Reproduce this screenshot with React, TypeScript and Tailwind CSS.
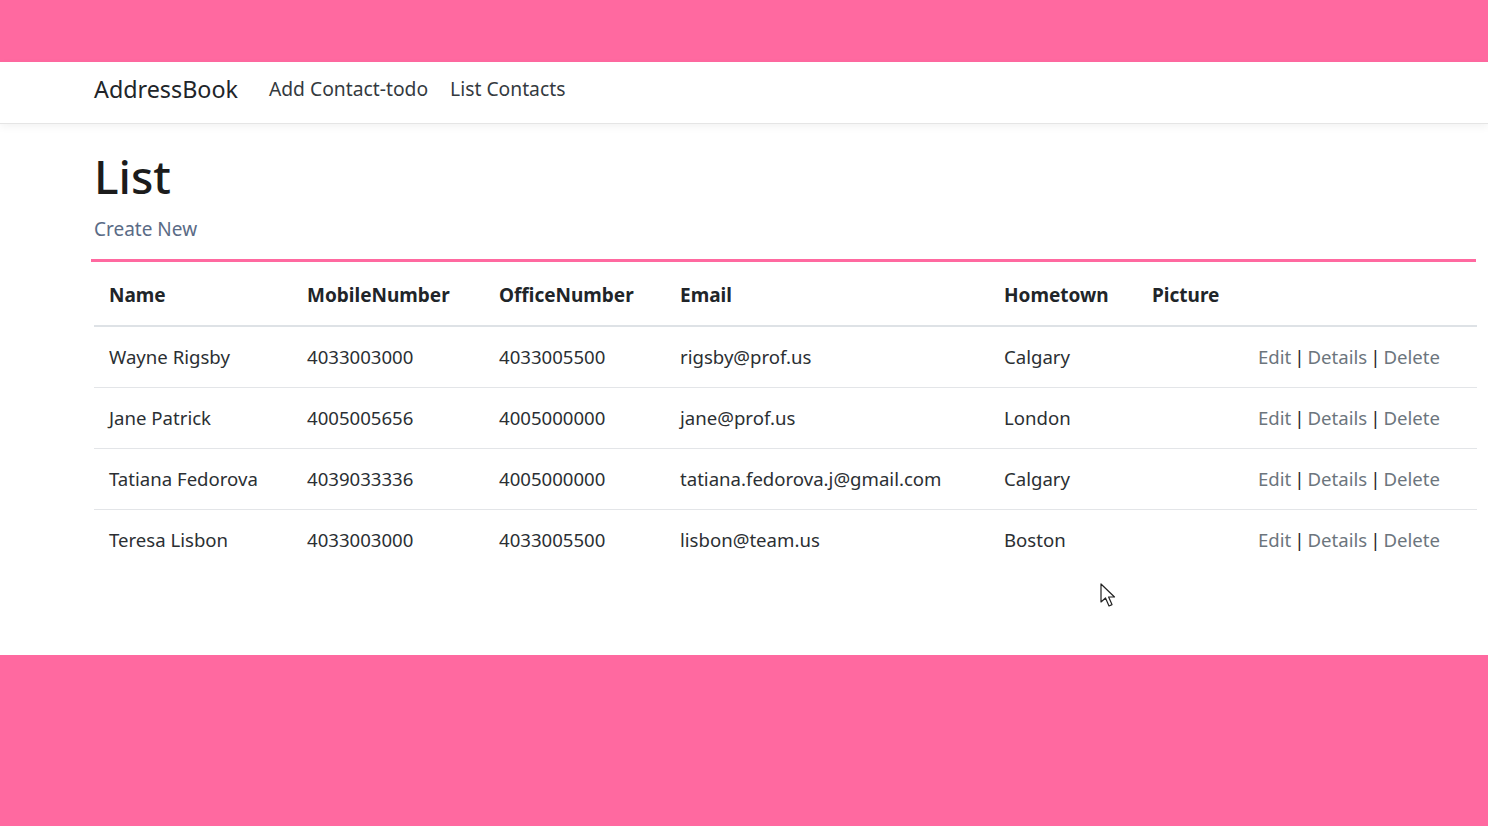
import React from "react";

const contacts = [
  { name: "Wayne Rigsby", mobile: "4033003000", office: "4033005500", email: "rigsby@prof.us", town: "Calgary" },
  { name: "Jane Patrick", mobile: "4005005656", office: "4005000000", email: "jane@prof.us", town: "London" },
  { name: "Tatiana Fedorova", mobile: "4039033336", office: "4005000000", email: "tatiana.fedorova.j@gmail.com", town: "Calgary" },
  { name: "Teresa Lisbon", mobile: "4033003000", office: "4033005500", email: "lisbon@team.us", town: "Boston" },
];

const headers = ["Name", "MobileNumber", "OfficeNumber", "Email", "Hometown", "Picture", ""];

export default function App() {
  return (
    <div className="min-h-[826px] bg-[#ff69a0] font-['Noto_Sans','Open_Sans',sans-serif] text-[#212529]">
      <div className="h-[62px]" />
      <div className="relative h-[593px] bg-white">
        {/* navbar */}
        <nav className="flex h-[62px] items-center border-b border-[#e5e5e5] bg-white pb-[7px] pl-[94px] shadow-[0_3px_8px_rgba(0,0,0,0.05)]">
          <span className="text-[23.3px] text-[#212529]">AddressBook</span>
          <div className="ml-[31px] flex gap-[22px] text-[19.3px] text-[#343a40]">
            <span>Add Contact-todo</span>
            <span>List Contacts</span>
          </div>
        </nav>

        <main className="pl-[91px] pr-[12px]">
          <h1 className="ml-[3px] mt-[22px] text-[46px] font-medium leading-[60px] text-[#1c1c1c]">List</h1>
          <div className="ml-[3px] mt-[10px] text-[19px] leading-[27px] text-[#5a6b86]">Create New</div>
          <div className="mt-[16px] h-[3px] bg-[#ff69a0]" />

          <table className="ml-[3px] w-[1383px] table-fixed border-collapse text-[18.6px] text-[#2b2f33]">
            <colgroup>
              <col className="w-[198px]" />
              <col className="w-[192px]" />
              <col className="w-[181px]" />
              <col className="w-[324px]" />
              <col className="w-[148px]" />
              <col className="w-[106px]" />
              <col />
            </colgroup>
            <thead>
              <tr className="h-[64px] border-b-2 border-[#dee2e6]">
                {headers.map((h, i) => (
                  <th key={i} className="px-[15px] pt-[3px] text-left text-[19px] font-bold text-[#212529]">
                    {h}
                  </th>
                ))}
              </tr>
            </thead>
            <tbody>
              {contacts.map((c, i) => (
                <tr key={i} className={"h-[61px] " + (i < contacts.length - 1 ? "border-b border-[#e3e5e8]" : "")}>
                  <td className="px-[15px]">{c.name}</td>
                  <td className="px-[15px]">{c.mobile}</td>
                  <td className="px-[15px]">{c.office}</td>
                  <td className="px-[15px]">{c.email}</td>
                  <td className="px-[15px]">{c.town}</td>
                  <td className="px-[15px]"></td>
                  <td className="px-[15px] whitespace-nowrap text-[#6c757d]">
                    <span>Edit</span>
                    <span className="mx-[3px] text-[#212529]">|</span>
                    <span>Details</span>
                    <span className="mx-[3px] text-[#212529]">|</span>
                    <span>Delete</span>
                  </td>
                </tr>
              ))}
            </tbody>
          </table>
        </main>

        {/* mouse cursor */}
        <svg className="absolute left-[1100px] top-[521px]" width="18" height="26" viewBox="0 0 18 26">
          <path d="M1 1 L1 19 L5.5 15 L9 23 L12 21.6 L8.6 14 L14.5 14 Z" fill="white" stroke="#222" strokeWidth="1.2" strokeLinejoin="round" />
        </svg>
      </div>
    </div>
  );
}
